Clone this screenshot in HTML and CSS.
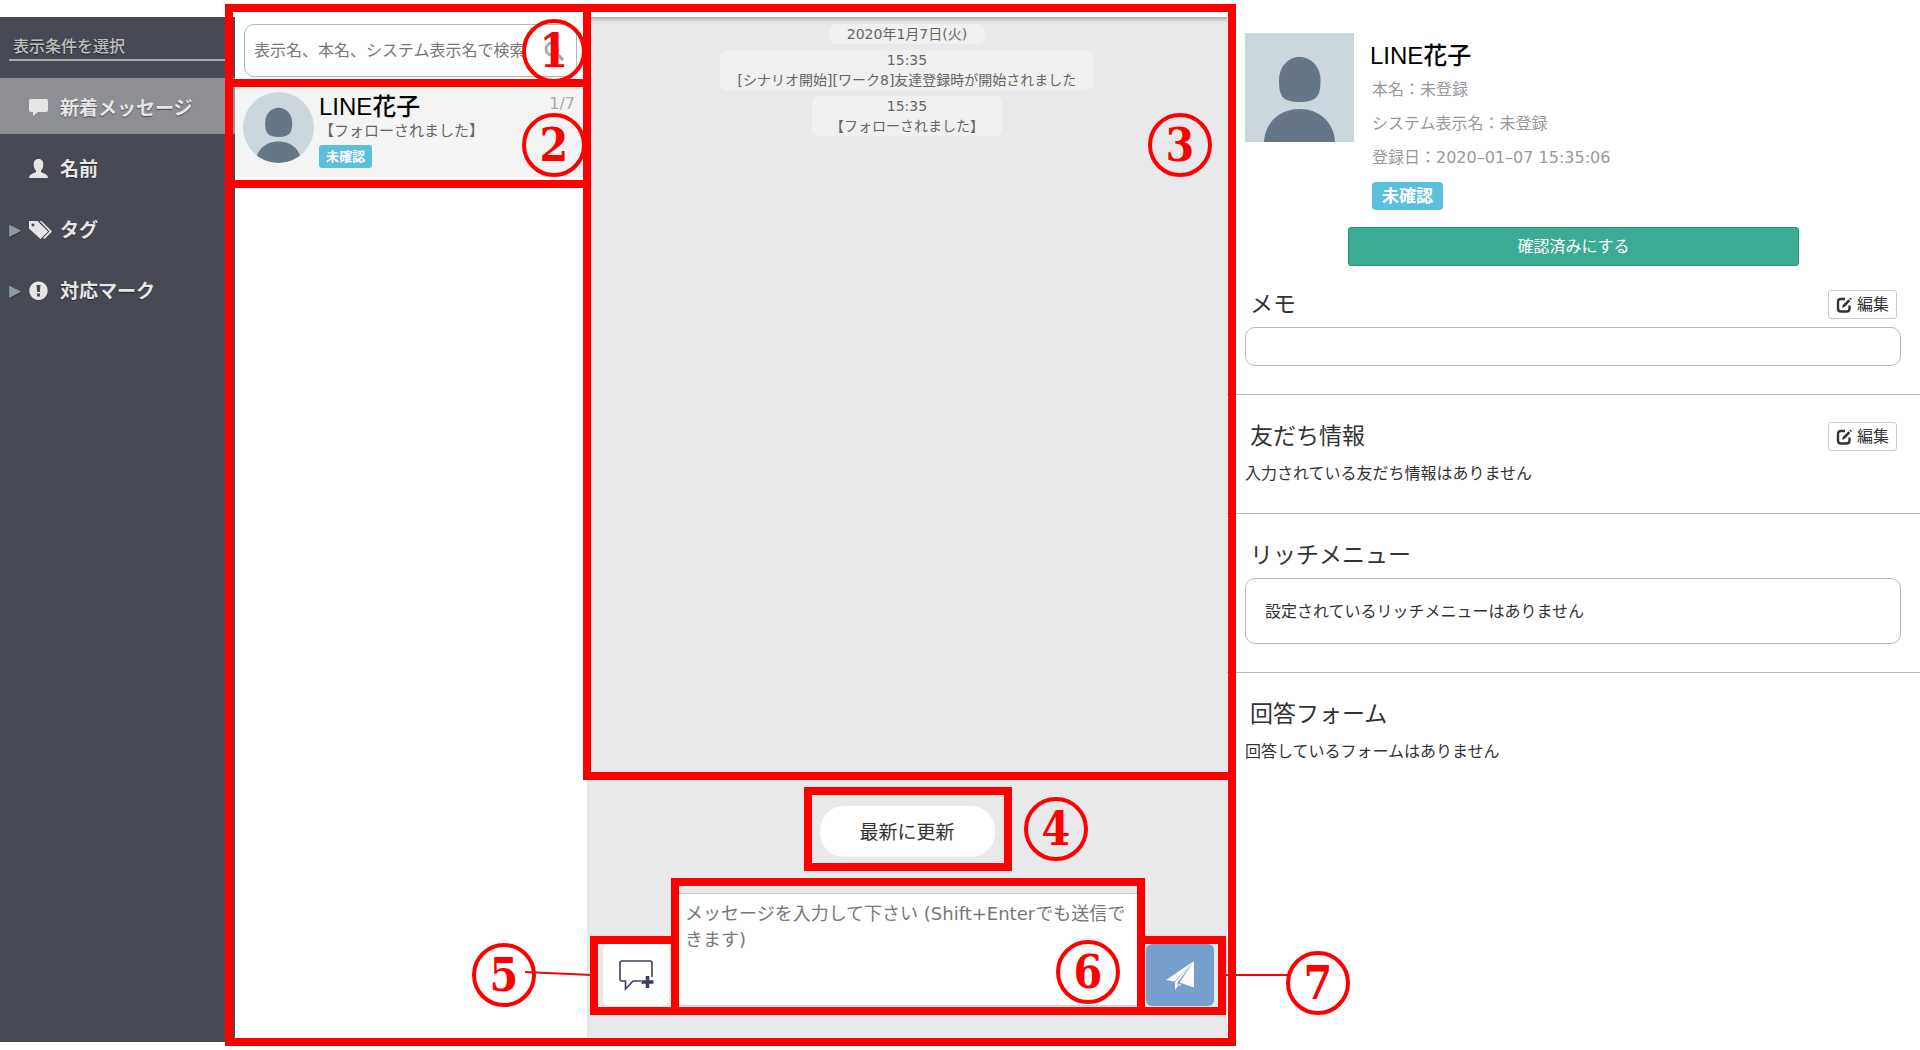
FILE: index.html
```html
<!DOCTYPE html>
<html lang="ja">
<head>
  <meta charset="UTF-8">
  <title>個別トーク</title>
  <link rel="stylesheet" href="styles.css">
</head>
<body>
  <svg class="defs" aria-hidden="true">
    <symbol id="avatar" viewBox="0 0 109 109">
      <rect width="109" height="109" fill="#cbd6dd"/>
      <path d="M54.5 24C66 24 75.5 34 75.5 47C75.5 63 72 69 54.5 69C37 69 34 63 34 47C34 34 43 24 54.5 24Z" fill="#667686"/>
      <path d="M19 109C20 89 35 76 54.500 76C74 76 89 89 90 109Z" fill="#667686"/>
    </symbol>
    <symbol id="edit" viewBox="0 0 16 16">
      <path d="M9 2H5Q2 2 2 5V11.500Q2 14.500 5 14.500H10.500Q13.500 14.500 13.500 11.500V8.500" fill="none" stroke="#333" stroke-width="2.400"/>
      <path d="M6 11L6.800 8L12.500 2.200L14.300 4L8.800 9.800Z M13.300 1.400L14.300 .4L16 2.200L15.100 3.100Z" fill="#333"/>
    </symbol>
  </svg>

  <main class="app">
    <nav class="sidebar">
      <h2 class="sidebar-title">表示条件を選択</h2>
      <a class="menu-item active" href="#">
        <span class="arrow"></span>
        <svg class="menu-icon" viewBox="0 0 24 20"><path d="M2 1H17Q19 1 19 3V12Q19 14 17 14H9L4 18V14H2Q0 14 0 12V3Q0 1 2 1Z"/></svg>
        新着メッセージ
      </a>
      <a class="menu-item" href="#">
        <span class="arrow"></span>
        <svg class="menu-icon" viewBox="0 0 24 20"><path d="M9.500 0C13 0 14.500 2.500 14.300 6C14.100 9 13 10.500 12 11.500V13C14 14.500 19 15 19 19H0C0 15 5 14.500 7 13V11.500C6 10.500 4.900 9 4.700 6C4.500 2.500 6 0 9.500 0Z"/></svg>
        名前
      </a>
      <a class="menu-item" href="#">
        <span class="arrow">▶</span>
        <svg class="menu-icon" viewBox="0 0 24 20"><path fill-rule="evenodd" d="M0 1H8.500L19 11.500L11.500 19L0 8.500ZM4 3.500A1.500 1.500 0 1 0 4.010 3.500Z"/><path d="M10.500 1H12.500L23 11.500L15.500 19L14.200 17.800L20.500 11.500Z"/></svg>
        タグ
      </a>
      <a class="menu-item" href="#">
        <span class="arrow">▶</span>
        <svg class="menu-icon" viewBox="0 0 24 20"><path fill-rule="evenodd" d="M9.500 .5A9.200 9.200 0 1 0 9.510 .5ZM7.500 4H11.500L10.800 11H8.200ZM8 12.500H11V15.500H8Z"/></svg>
        対応マーク
      </a>
    </nav>

    <section class="talk-list">
      <label class="search">
        <input type="text" aria-label="検索" placeholder="表示名、本名、システム表示名で検索">
        <svg viewBox="0 0 20 20"><circle cx="8" cy="8" r="6" fill="none" stroke="#aaa" stroke-width="3"/><path d="M12.500 12.500L18 18" stroke="#aaa" stroke-width="3.500" stroke-linecap="round"/></svg>
      </label>
      <article class="talk">
        <svg class="talk-avatar"><use href="#avatar"/></svg>
        <div class="talk-body">
          <h3 class="name">LINE花子</h3>
          <p class="talk-text">【フォローされました】</p>
          <span class="badge">未確認</span>
        </div>
        <time class="talk-date">1/7</time>
      </article>
    </section>

    <section class="chat">
      <div class="log">
        <p class="notice">2020年1月7日(火)</p>
        <p class="notice">15:35<br>[シナリオ開始][ワーク8]友達登録時が開始されました</p>
        <p class="notice">15:35<br>【フォローされました】</p>
      </div>
      <button class="refresh" type="button">最新に更新</button>
      <form class="composer">
        <button class="template" type="button" aria-label="テンプレート">
          <svg viewBox="0 0 36 32"><path d="M34 18V4Q34 2 32 2H4Q2 2 2 4V20Q2 22 4 22H7.500V30L15 22H23" fill="none" stroke="#3c3f63" stroke-width="1.600"/><path d="M29.500 17V29M23.500 23H35.500" stroke="#3c3f63" stroke-width="3.600"/></svg>
        </button>
        <textarea aria-label="メッセージ" placeholder="メッセージを入力して下さい (Shift+Enterでも送信できます)"></textarea>
        <button class="send" type="submit" aria-label="送信">
          <svg viewBox="0 0 28 29" fill="#fafafa"><path d="M28 0L0 19L8.500 20.500ZM28 0L9 21V29L12 25L11.500 21.500ZM28 0L13.500 21.500L28 26.500ZM12.800 22.500L15 23.200L12.500 25.500Z"/></svg>
        </button>
      </form>
    </section>

    <aside class="details">
      <header class="profile">
        <svg class="profile-avatar"><use href="#avatar"/></svg>
        <div class="profile-body">
          <h1 class="name">LINE花子</h1>
          <p>本名：未登録</p>
          <p>システム表示名：未登録</p>
          <p>登録日：2020–01–07 15:35:06</p>
          <span class="badge badge-large">未確認</span>
        </div>
      </header>
      <button class="confirm" type="button">確認済みにする</button>

      <section class="block block-memo">
        <div class="block-head">
          <h2>メモ</h2>
          <button class="edit" type="button"><svg><use href="#edit"/></svg>編集</button>
        </div>
        <div class="box"></div>
      </section>
      <section class="block">
        <div class="block-head">
          <h2>友だち情報</h2>
          <button class="edit" type="button"><svg><use href="#edit"/></svg>編集</button>
        </div>
        <p>入力されている友だち情報はありません</p>
      </section>
      <section class="block">
        <div class="block-head"><h2>リッチメニュー</h2></div>
        <div class="box box-menu">設定されているリッチメニューはありません</div>
      </section>
      <section class="block">
        <div class="block-head"><h2>回答フォーム</h2></div>
        <p>回答しているフォームはありません</p>
      </section>
    </aside>
  </main>

  <!-- 説明用の番号と赤枠 -->
  <svg class="guide" width="1360" height="1050">
    <g class="guide-circles">
      <circle cx="554" cy="51" r="30"/>
      <circle cx="554" cy="145" r="30"/>
      <circle cx="1180" cy="145" r="30"/>
      <circle cx="1056" cy="829" r="30"/>
      <circle cx="504" cy="975" r="30"/>
      <circle cx="1088" cy="972" r="30"/>
      <circle cx="1318" cy="983" r="30"/>
    </g>
    <g class="guide-numbers">
      <text x="554" y="67">1</text>
      <text x="554" y="161">2</text>
      <text x="1180" y="161">3</text>
      <text x="1056" y="845">4</text>
      <text x="504" y="991">5</text>
      <text x="1088" y="988">6</text>
      <text x="1318" y="999">7</text>
    </g>
    <g class="guide-frames">
      <rect x="229" y="8" width="1003" height="1034"/>
      <rect x="229" y="8" width="358" height="75"/>
      <rect x="229" y="83" width="358" height="101"/>
      <rect x="587" y="8" width="645" height="768"/>
      <rect x="808" y="791" width="200" height="76"/>
      <rect x="594" y="940" width="81" height="71"/>
      <rect x="675" y="882" width="466" height="129"/>
      <rect x="1141" y="940" width="81" height="71"/>
    </g>
    <path class="guide-line" d="M525 972L592 975M1224 975H1289"/>
  </svg>
</body>
</html>
```
FILE: styles.css
```css
* {
  box-sizing: border-box;
}
body {
  position: relative;
  margin: 0;
  background: #fff;
  color: #333;
  font-family: "DejaVu Sans", "Noto Sans CJK JP", sans-serif;
  font-size: 16px;
  line-height: 24px;
}
h1, h2, h3, p {
  margin: 0;
  font-weight: normal;
}
button, input, textarea {
  font: inherit;
  color: inherit;
}
button {
  padding: 0;
  cursor: pointer;
}
.defs {
  position: absolute;
  width: 0;
  height: 0;
}
.app {
  display: grid;
  grid-template-columns: 235px 352px 640px 1fr;
  min-height: 100vh;
  padding: 17px 0 8px;
}

/* sidebar */
.sidebar {
  background: #474954;
  color: #e6e6e6;
}
.sidebar-title {
  margin: 18px 10px 17px 9px;
  padding-left: 4px;
  border-bottom: 2px solid #a9aaae;
  color: #bfbfbf;
  font-size: 16px;
  font-weight: 500;
  text-shadow: 0 1px 1px rgba(0,0,0,0.5);
}
.menu-item {
  display: flex;
  align-items: center;
  height: 56px;
  margin-bottom: 5px;
  padding: 4px 0 0 9px;
  color: inherit;
  font-size: 19px;
  font-weight: bold;
  text-decoration: none;
  text-shadow: 0 1px 1px rgba(0,0,0,0.5);
}
.menu-item.active {
  background: #8e8f94;
}
.arrow {
  width: 20px;
  color: #8f9aa0;
  font-size: 16px;
  font-weight: normal;
}
.menu-icon {
  width: 24px;
  height: 20px;
  margin-right: 7px;
  fill: #e6e6e6;
}

/* talk list */
.talk-list {
  padding-top: 7px;
}
.search {
  display: flex;
  align-items: center;
  height: 53px;
  margin: 0 10px 7px 9px;
  padding: 1px 12px 0 9px;
  border: 1px solid #b5b5b8;
  border-radius: 10px;
}
.search input {
  flex: 1;
  min-width: 0;
  padding: 0;
  border: 0;
  outline: 0;
  background: none;
}
.search svg {
  width: 20px;
  height: 20px;
}
::placeholder {
  color: #777;
  opacity: 1;
}
.talk {
  display: flex;
  height: 93px;
  padding: 8px 12px 0 8px;
  background: #f4f4f5;
}
.talk-avatar {
  width: 71px;
  height: 71px;
  border-radius: 50%;
}
.talk-body {
  flex: 1;
  padding: 1px 0 0 5px;
}
.name {
  color: #000;
  font-family: "Liberation Sans", "Noto Sans CJK JP", sans-serif;
  font-size: 24px;
  font-weight: 500;
  line-height: 28px;
}
.talk-text {
  color: #666;
  font-size: 15px;
  line-height: 20px;
}
.badge {
  display: block;
  width: fit-content;
  margin-top: 4px;
  padding: 0 7px;
  border-radius: 3px;
  background: #5bc0de;
  color: #fff;
  font-size: 13px;
  font-weight: bold;
  line-height: 23px;
}
.talk-date {
  color: #aaa;
}

/* chat */
.chat {
  display: flex;
  flex-direction: column;
  align-items: center;
  padding-bottom: 36px;
  background: #e9e9eb;
  box-shadow: inset 0 5px 4px -3px rgba(0,0,0,0.3);
}
.log {
  display: flex;
  flex: 1;
  flex-direction: column;
  align-items: center;
  gap: 6px;
  padding-top: 7px;
}
.notice {
  padding: 0 18px;
  border-radius: 7px;
  background: #f0f0f0;
  color: #666;
  font-size: 14px;
  line-height: 20px;
  text-align: center;
}
.refresh {
  width: 175px;
  height: 51px;
  border: 0;
  border-radius: 24px;
  background: #fff;
  font-size: 19px;
}
.composer {
  display: flex;
  align-items: flex-end;
  align-self: stretch;
  gap: 4px;
  padding: 36px 13px 0 16px;
}
.composer textarea {
  flex: 1;
  min-width: 0;
  height: 113px;
  padding: 7px 11px;
  border: 1px solid #ccc;
  border-radius: 4px;
  outline: 0;
  background: #fff;
  font-size: 18px;
  line-height: 26px;
  resize: none;
}
.template, .send {
  display: flex;
  align-items: center;
  justify-content: center;
  height: 62px;
  border: 0;
  border-radius: 6px;
}
.template {
  width: 66px;
  background: #fff;
}
.template svg {
  width: 36px;
  height: 32px;
}
.send {
  width: 68px;
  background: #76a0cb;
}
.send svg {
  width: 28px;
  height: 29px;
}

/* details */
.profile {
  display: flex;
  padding: 16px 18px 0;
}
.profile-avatar {
  width: 109px;
  height: 109px;
}
.profile-body {
  padding: 9px 0 0 18px;
  color: #999;
  line-height: 34px;
}
.profile-body .name {
  margin: 0 0 3px -2px;
}
.badge-large {
  margin-top: 7px;
  padding: 0 10px;
  border-radius: 4px;
  font-size: 17px;
  line-height: 28px;
}
.confirm {
  display: block;
  width: 65%;
  height: 39px;
  margin: 17px auto 0;
  border: 1px solid #289279;
  border-radius: 3px;
  background: #3bab94;
  color: #fff;
}
.block {
  padding: 27px 19px 28px 18px;
  border-bottom: 1px solid #b9b9bb;
}
.block-memo {
  padding-top: 24px;
}
.block:last-child {
  border-bottom: 0;
}
.block-head {
  display: flex;
  align-items: center;
  justify-content: space-between;
  height: 29px;
  margin-bottom: 8px;
  padding: 0 4px 0 5px;
}
.block-head h2 {
  padding-bottom: 2px;
  font-size: 23px;
}
.block p {
  padding-top: 4px;
  line-height: 22px;
}
.edit {
  display: flex;
  align-items: center;
  gap: 5px;
  height: 29px;
  padding: 0 7px;
  border: 1px solid #ccc;
  border-radius: 3px;
  background: #fff;
}
.edit svg {
  width: 16px;
  height: 16px;
}
.box {
  min-height: 39px;
  border: 1px solid #b9b9bb;
  border-radius: 10px;
}
.box-menu {
  padding: 21px 19px 19px;
}

/* guide marks */
.guide {
  position: absolute;
  top: 0;
  left: 0;
  pointer-events: none;
}
.guide-circles, .guide-frames, .guide-line {
  fill: none;
  stroke: #f00;
}
.guide-circles {
  stroke-width: 4px;
}
.guide-frames {
  stroke-width: 8px;
}
.guide-line {
  stroke-width: 2px;
}
.guide-numbers {
  fill: #f00;
  font-family: "DejaVu Serif Condensed", "DejaVu Serif", serif;
  font-size: 46px;
  font-weight: bold;
  text-anchor: middle;
}
```
